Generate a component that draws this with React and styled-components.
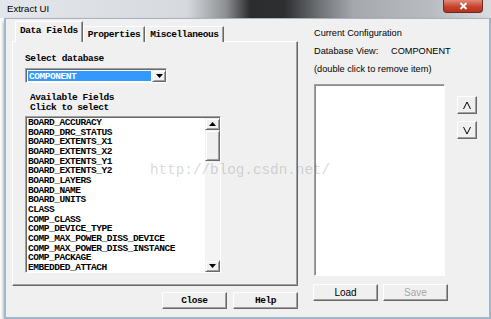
import styled, { createGlobalStyle } from "styled-components";

const MONO = `"Liberation Mono", "DejaVu Sans Mono", monospace`;
const SANS = `"Liberation Sans", Arial, sans-serif`;

const Global = createGlobalStyle`
  html, body { margin: 0; padding: 0; background: #fff; }
  body { width: 491px; height: 319px; overflow: hidden; font-family: ${SANS}; }
`;

const fields = [
  "BOARD_ACCURACY",
  "BOARD_DRC_STATUS",
  "BOARD_EXTENTS_X1",
  "BOARD_EXTENTS_X2",
  "BOARD_EXTENTS_Y1",
  "BOARD_EXTENTS_Y2",
  "BOARD_LAYERS",
  "BOARD_NAME",
  "BOARD_UNITS",
  "CLASS",
  "COMP_CLASS",
  "COMP_DEVICE_TYPE",
  "COMP_MAX_POWER_DISS_DEVICE",
  "COMP_MAX_POWER_DISS_INSTANCE",
  "COMP_PACKAGE",
  "EMBEDDED_ATTACH",
];

const Screen = styled.div`
  position: relative;
  width: 491px;
  height: 319px;
`;

const TitleBar = styled.div`
  height: 18px;
  display: flex;
  align-items: flex-start;
  justify-content: space-between;
  background: linear-gradient(90deg, #e3e7eb 0%, #d6dade 38%, #8d9093 46%, #2b2c2e 51%, #2e2f31 58%, #6e7175 65%, #a5a9ae 72%, #b9bdc2 88%, #d8dce0 100%);
`;

const Title = styled.span`
  margin: 3px 0 0 7px;
  font: 9.6px/12px ${SANS};
  color: #000;
`;

const CloseBtn = styled.div`
  width: 38px;
  height: 12px;
  margin-right: 8px;
  border: 1px solid #6e2a22;
  border-top: 0;
  border-radius: 0 0 4px 4px;
  background: linear-gradient(#e08a78, #c8432f 55%, #b5321f);
  display: flex;
  align-items: center;
  justify-content: center;
`;

const Frame = styled.div`
  margin-left: 4px;
  width: 477px;
  height: 293px;
  border: 2px solid #a3b7cb;
  border-top: 1px solid #aab3bd;
  background: #f0f0f0;
  display: flex;
  padding: 5px 0 0 6px;
  box-sizing: content-box;
  box-shadow: 0 3px 4px rgba(0, 0, 0, 0.45);
`;

const LeftColumn = styled.div`
  width: 286px;
  display: flex;
  flex-direction: column;
`;

const TabStrip = styled.div`
  height: 17px;
  display: flex;
  align-items: flex-end;
  padding-left: 3px;
`;

const Tab = styled.div`
  position: relative;
  z-index: ${(p) => (p.$active ? 2 : 1)};
  height: ${(p) => (p.$active ? 18 : 15)}px;
  margin-bottom: -1px;
  padding: 0 4px ${(p) => (p.$active ? 2 : 0)}px;
  background: #f0f0f0;
  border-top: 1px solid #fff;
  border-left: 1px solid #fff;
  border-right: 1px solid #696969;
  box-shadow: inset -1px 0 0 #a0a0a0;
  display: flex;
  align-items: center;
  font: bold 9.5px/1 ${MONO};
  letter-spacing: -0.45px;
  color: #000;
`;

const Panel = styled.div`
  height: 245px;
  box-sizing: border-box;
  border: 1px solid;
  border-color: #fff #696969 #696969 #fff;
  box-shadow: inset -1px -1px 0 #a0a0a0;
  padding: 11px 0 0 12px;
  display: flex;
  flex-direction: column;
  align-items: flex-start;
`;

const MonoLabel = styled.div`
  font: bold 9.5px/${(p) => p.$lh || 12}px ${MONO};
  letter-spacing: -0.45px;
  color: #000;
  margin: ${(p) => p.$m || 0};
`;

const Combo = styled.div`
  margin-top: 3px;
  width: 142px;
  height: 15px;
  box-sizing: border-box;
  display: flex;
  background: #fff;
  border: 1px solid;
  border-color: #a0a0a0 #fff #fff #a0a0a0;
  box-shadow: inset 1px 1px 0 #696969;
  padding: 1px 0 0 1px;
`;

const ComboValue = styled.div`
  flex: 1;
  margin: 1px 1px 1px 1px;
  background: #3399ff;
  color: #fff;
  font: bold 9.5px/11px ${MONO};
  letter-spacing: -0.45px;
  padding-left: 1px;
`;

const ArrowBox = styled.div`
  width: ${(p) => p.$w || 14}px;
  height: ${(p) => (p.$h ? `${p.$h}px` : "auto")};
  box-sizing: border-box;
  background: #f0f0f0;
  border: 1px solid;
  border-color: #f0f0f0 #696969 #696969 #f0f0f0;
  box-shadow: inset 1px 1px 0 #fff, inset -1px -1px 0 #a0a0a0;
  display: flex;
  align-items: center;
  justify-content: center;
`;

const ListBox = styled.div`
  margin-top: 3px;
  width: 196px;
  height: 157px;
  box-sizing: border-box;
  display: flex;
  background: #fff;
  border: 1px solid;
  border-color: #a0a0a0 #fff #fff #a0a0a0;
  box-shadow: inset 1px 1px 0 #696969;
  padding: 1px 0 0 1px;
`;

const Items = styled.div`
  flex: 1;
  padding: 0 0 0 1px;
  overflow: hidden;
`;

const Item = styled.div`
  font: bold 9.5px/9.67px ${MONO};
  letter-spacing: -0.45px;
  color: #000;
  white-space: nowrap;
`;

const ScrollBar = styled.div`
  width: 15px;
  display: flex;
  flex-direction: column;
  background: #f4f4f4;
`;

const Track = styled.div`
  flex: 1;
`;

const BottomRow = styled.div`
  display: flex;
  justify-content: ${(p) => p.$justify || "flex-start"};
  gap: ${(p) => p.$gap || 6}px;
  margin: ${(p) => p.$m || 0};
`;

const Button = styled.button`
  width: 65px;
  height: 17px;
  padding: 0;
  box-sizing: border-box;
  background: #f0f0f0;
  border: 1px solid;
  border-color: #fff #696969 #696969 #fff;
  box-shadow: inset -1px -1px 0 #a0a0a0;
  font: ${(p) => (p.$sans ? `10px/1 ${SANS}` : `bold 9.5px/1 ${MONO}`)};
  letter-spacing: ${(p) => (p.$sans ? 0 : -0.45)}px;
  color: ${(p) => (p.disabled ? "#a6a6a6" : "#000")};
`;

const RightColumn = styled.div`
  margin-left: 16px;
  display: flex;
  flex-direction: column;
`;

const InfoLine = styled.div`
  font: 9.2px/18px ${SANS};
  color: #000;
  display: flex;
`;

const InfoKey = styled.span`
  width: 77px;
`;

const ConfigRow = styled.div`
  display: flex;
  margin-top: 6px;
`;

const ConfigList = styled.div`
  width: 131px;
  height: 192px;
  box-sizing: border-box;
  background: #fff;
  border: 1px solid;
  border-color: #a0a0a0 #fff #fff #a0a0a0;
  box-shadow: inset 1px 1px 0 #8a8a8a;
`;

const MoveColumn = styled.div`
  margin-left: 12px;
  padding-top: 12px;
  display: flex;
  flex-direction: column;
  gap: 7px;
`;

const MoveButton = styled.div`
  width: 20px;
  height: 18px;
  box-sizing: border-box;
  background: #f0f0f0;
  border: 1px solid;
  border-color: #fff #696969 #696969 #fff;
  box-shadow: inset -1px -1px 0 #a0a0a0;
  display: flex;
  align-items: center;
  justify-content: center;
`;

const Watermark = styled.div`
  position: absolute;
  left: 150px;
  top: 162px;
  font: 14.3px/16px ${MONO};
  color: rgba(120, 120, 120, 0.3);
  pointer-events: none;
`;

const Tri = ({ up }) => (
  <svg width="7" height="4" viewBox="0 0 7 4">
    <polygon points={up ? "0,4 7,4 3.5,0" : "0,0 7,0 3.5,4"} fill="#000" />
  </svg>
);

const Chevron = ({ up }) => (
  <svg width="10" height="9" viewBox="0 0 10 9">
    <polyline
      points={up ? "1.5,8 5,1 8.5,8" : "1.5,1 5,8 8.5,1"}
      fill="none"
      stroke="#000"
      strokeWidth="1"
    />
  </svg>
);

const App = () => {
  return (
    <Screen>
      <Global />
      <TitleBar>
        <Title>Extract UI</Title>
        <CloseBtn>
          <svg width="9" height="8" viewBox="0 0 9 8">
            <path d="M1.5 1 L7.5 7 M7.5 1 L1.5 7" stroke="#fff" strokeWidth="2" />
          </svg>
        </CloseBtn>
      </TitleBar>
      <Frame>
        <LeftColumn>
          <TabStrip>
            <Tab $active>Data Fields</Tab>
            <Tab>Properties</Tab>
            <Tab>Miscellaneous</Tab>
          </TabStrip>
          <Panel>
            <MonoLabel>Select database</MonoLabel>
            <Combo>
              <ComboValue>COMPONENT</ComboValue>
              <ArrowBox>
                <Tri />
              </ArrowBox>
            </Combo>
            <MonoLabel $lh={10} $m="10px 0 0 5px">
              Available Fields
              <br />
              Click to select
            </MonoLabel>
            <ListBox>
              <Items>
                {fields.map((f) => (
                  <Item key={f}>{f}</Item>
                ))}
              </Items>
              <ScrollBar>
                <ArrowBox $w={15} $h={12}>
                  <Tri up />
                </ArrowBox>
                <ArrowBox $w={15} $h={31} />
                <Track />
                <ArrowBox $w={15} $h={12}>
                  <Tri />
                </ArrowBox>
              </ScrollBar>
            </ListBox>
          </Panel>
          <BottomRow $justify="flex-end" $m="6px 0 0 0">
            <Button>Close</Button>
            <Button>Help</Button>
          </BottomRow>
        </LeftColumn>
        <RightColumn>
          <InfoLine>Current Configuration</InfoLine>
          <InfoLine>
            <InfoKey>Database View:</InfoKey>
            COMPONENT
          </InfoLine>
          <InfoLine>(double click to remove item)</InfoLine>
          <ConfigRow>
            <ConfigList />
            <MoveColumn>
              <MoveButton>
                <Chevron up />
              </MoveButton>
              <MoveButton>
                <Chevron />
              </MoveButton>
            </MoveColumn>
          </ConfigRow>
          <BottomRow $gap={5} $m="8px 0 0 -1px">
            <Button $sans>Load</Button>
            <Button $sans disabled>
              Save
            </Button>
          </BottomRow>
        </RightColumn>
      </Frame>
      <Watermark>http://blog.csdn.net/</Watermark>
    </Screen>
  );
};

export default App;
